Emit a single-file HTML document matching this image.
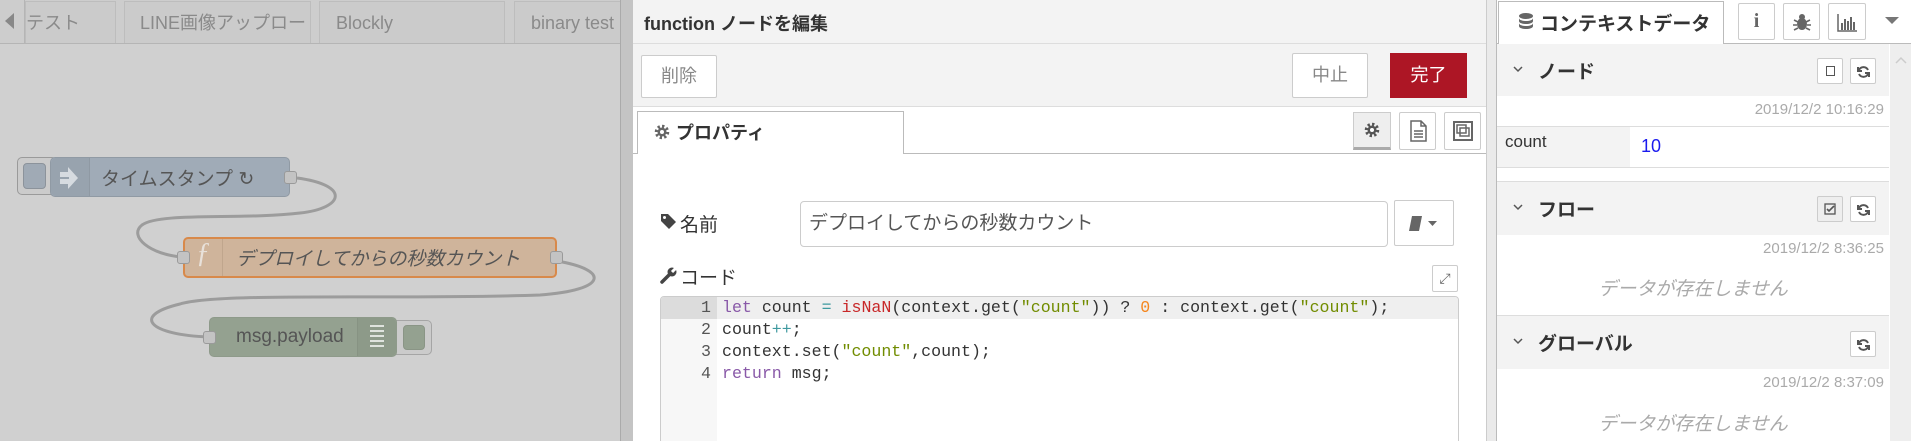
<!DOCTYPE html>
<html><head><meta charset="utf-8"><style>
*{box-sizing:border-box;margin:0;padding:0}
html,body{overflow:hidden}
body{width:1911px;height:441px;position:relative;background:#d0d0d0;font-family:"Liberation Sans","Noto Sans CJK JP",sans-serif;color:#333}
.a{position:absolute}
.tab{position:absolute;top:1px;height:42px;border:1px solid #bdbdbd;border-bottom:none;background:#cbcbcb;color:#8a8a8a;font-size:18px;line-height:42px;padding-left:15px;overflow:hidden;white-space:nowrap}
.port{position:absolute;width:13px;height:13px;background:#c3c3c3;border:1px solid #9a9a9a;border-radius:3px}
.btn{position:absolute;background:#fff;border:1px solid #ccc;border-radius:2px;text-align:center;color:#888}
.sbtn{position:absolute;width:26px;height:26px;background:#fff;border:1px solid #ccc;border-radius:2px}
.hdr{position:absolute;left:1497px;width:392px;background:#f3f3f3;border-top:1px solid #ddd}
.hdr .t{position:absolute;left:41px;font-weight:bold;font-size:19px;color:#333;top:13px}
.hdr svg{position:absolute;left:16px;top:22px}
.ts{position:absolute;right:27px;font-size:15px;color:#aaa}
.em{position:absolute;left:1497px;width:392px;text-align:center;font-size:19px;font-style:italic;color:#aaa}
.code{font-family:"Liberation Mono",monospace;font-size:16.6px;line-height:22px;white-space:pre}
</style></head><body>
<svg width="0" height="0" style="position:absolute"><defs>
<g id="gear"><circle cx="8" cy="8" r="5.5" fill="none" stroke="currentColor" stroke-width="3.5" stroke-dasharray="2.2 2.1"/><circle cx="8" cy="8" r="4.5" fill="currentColor"/><circle cx="8" cy="8" r="2" fill="#fff"/></g>
<g id="ref"><path d="M12,6 A5,5 0 0 0 3,6 M2,3v4h4 M3,10 A5,5 0 0 0 12,10 M13,13v-4h-4" fill="none" stroke="currentColor" stroke-width="2"/></g>
<path id="chev" d="M1,1l4,4l4,-4" fill="none" stroke="#555" stroke-width="1.5"/>
</defs></svg>

<!-- canvas tabs -->
<div class="a" style="left:0;top:0;width:633px;height:44px;background:#cdcdcd;border-bottom:1px solid #b5b5b5"></div>
<div class="a" style="left:5px;top:13px;width:0;height:0;border-top:8px solid transparent;border-bottom:8px solid transparent;border-right:9px solid #888"></div>
<div class="a" style="left:24px;top:0;width:1px;height:44px;background:#b5b5b5"></div>
<div class="tab" style="left:25px;width:91px;padding-left:0">テスト</div>
<div class="tab" style="left:124px;width:187px">LINE画像アップロード</div>
<div class="tab" style="left:319px;width:186px;padding-left:16px">Blockly</div>
<div class="tab" style="left:514px;width:110px;padding-left:16px">binary test</div>

<!-- wires -->
<svg class="a" style="left:0;top:0" width="633" height="441">
<g fill="none" stroke="#9c9c9c" stroke-width="3">
<path d="M297,178 C350,185 345,208 300,213 C240,220 160,212 142,225 C128,236 150,255 183,257"/>
<path d="M557,261 C610,270 608,290 540,295 C400,300 220,292 180,304 C130,316 150,335 209,337"/>
</g></svg>

<!-- inject node -->
<div class="a" style="left:17px;top:157px;width:40px;height:38px;background:#cbcbcb;border:1px solid #9a9a9a;border-radius:5px"></div>
<div class="a" style="left:23px;top:163px;width:23px;height:26px;background:#a0aab5;border:1px solid #8c939b;border-radius:4px"></div>
<div class="a" style="left:50px;top:157px;width:240px;height:40px;background:#a0abb7;border:1px solid #909aa4;border-radius:5px"></div>
<div class="a" style="left:51px;top:158px;width:39px;height:38px;background:#98a3ae;border-right:1px solid #8f99a3;border-radius:5px 0 0 5px"></div>
<svg class="a" style="left:58px;top:165px" width="24" height="26"><path d="M2,7h8v-5l10,11l-10,11v-5h-8z" fill="#d6dbe0"/><path d="M2,13h9" stroke="#98a3ae" stroke-width="2"/></svg>
<div class="a" style="left:101px;top:164px;font-size:19px;color:#555">タイムスタンプ ↻</div>
<div class="port" style="left:284px;top:171px"></div>

<!-- function node -->
<div class="a" style="left:183px;top:237px;width:374px;height:41px;background:#cfb49b;border:2px solid #d8894a;border-radius:5px"></div>
<div class="a" style="left:185px;top:239px;width:38px;height:37px;border-right:1px solid #c0a68d"></div>
<div class="a" style="left:196px;top:238px;font-size:28px;font-style:italic;color:#e8e1da;font-family:'Liberation Serif',serif">ƒ</div>
<div class="a" style="left:236px;top:244px;font-size:19px;font-style:italic;color:#555">デプロイしてからの秒数カウント</div>
<div class="port" style="left:177px;top:251px"></div>
<div class="port" style="left:550px;top:251px"></div>

<!-- debug node -->
<div class="a" style="left:390px;top:320px;width:42px;height:35px;background:#cbcbcb;border:1px solid #a5a5a5;border-radius:5px"></div>
<div class="a" style="left:403px;top:325px;width:22px;height:25px;background:#94a190;border:1px solid #8a9586;border-radius:4px"></div>
<div class="a" style="left:209px;top:317px;width:188px;height:40px;background:#94a190;border:1px solid #8e9a8a;border-radius:5px"></div>
<div class="a" style="left:357px;top:318px;width:39px;height:38px;background:#8d9a89;border-left:1px solid #879383;border-radius:0 5px 5px 0"></div>
<div class="a" style="left:370px;top:325px;width:14px;height:24px;background:repeating-linear-gradient(#dfe3de 0 2px,transparent 2px 5px)"></div>
<div class="a" style="left:236px;top:326px;font-size:19px;color:#555">msg.payload</div>
<div class="port" style="left:203px;top:331px"></div>

<!-- dialog -->
<div class="a" style="left:620px;top:0;width:13px;height:441px;background:#c4c4c4;border-left:1px solid #aaa"></div>
<div class="a" style="left:633px;top:0;width:853px;height:441px;background:#fff"></div>
<div class="a" style="left:633px;top:0;width:853px;height:44px;background:#f3f3f3;border-bottom:1px solid #ddd"></div>
<div class="a" style="left:644px;top:10px;font-size:18px;font-weight:bold;color:#333">function ノードを編集</div>
<div class="a" style="left:633px;top:44px;width:853px;height:63px;background:#f3f3f3;border-bottom:1px solid #ddd"></div>
<div class="btn" style="left:641px;top:55px;width:76px;height:43px;line-height:41px;font-size:18px">削除</div>
<div class="btn" style="left:1292px;top:53px;width:76px;height:45px;line-height:43px;font-size:18px">中止</div>
<div class="a" style="left:1390px;top:53px;width:77px;height:45px;background:#ad1625;color:#fff;text-align:center;line-height:45px;font-size:18px">完了</div>
<div class="a" style="left:633px;top:153px;width:853px;height:1px;background:#bbb"></div>
<div class="a" style="left:637px;top:111px;width:267px;height:43px;background:#fff;border:1px solid #bbb;border-bottom:none"></div>
<svg class="a" style="left:654px;top:124px;color:#666" width="16" height="16"><use href="#gear"/></svg>
<div class="a" style="left:676px;top:119px;font-size:18px;font-weight:bold;color:#333">プロパティ</div>
<div class="a" style="left:1353px;top:112px;width:38px;height:38px;background:#eee;border:1px solid #ccc;border-bottom:3px solid #aaa"></div>
<svg class="a" style="left:1364px;top:122px;color:#555" width="16" height="16"><use href="#gear"/></svg>
<div class="btn" style="left:1399px;top:112px;width:37px;height:38px"><svg width="20" height="22" style="margin-top:7px"><path d="M3,1h10l5,5v15h-15z M13,1v5h5 M6,11h9 M6,14h9 M6,17h9" fill="none" stroke="#666" stroke-width="1.5"/></svg></div>
<div class="btn" style="left:1444px;top:112px;width:37px;height:38px"><svg width="24" height="24" style="margin-top:6px"><rect x="3" y="3" width="18" height="18" fill="none" stroke="#666" stroke-width="2"/><rect x="6" y="6" width="9" height="8" fill="none" stroke="#666" stroke-width="1.5"/><rect x="9" y="9" width="9" height="8" fill="none" stroke="#666" stroke-width="1.5"/></svg></div>

<svg class="a" style="left:660px;top:213px" width="17" height="17"><path d="M1,1h7l8,8l-7,7l-8,-8z" fill="#444"/><circle cx="4.5" cy="4.5" r="1.5" fill="#fff"/></svg>
<div class="a" style="left:680px;top:210px;font-size:19px;color:#333">名前</div>
<div class="a" style="left:800px;top:201px;width:588px;height:46px;border:1px solid #ccc;border-radius:4px;font-size:19px;line-height:44px;padding-left:8px;color:#555">デプロイしてからの秒数カウント</div>
<div class="btn" style="left:1394px;top:200px;width:60px;height:46px"><svg width="34" height="20" style="margin-top:13px"><path d="M5,2h10l-3,15h-10z" fill="#666"/><path d="M21,7h9l-4.5,5z" fill="#666"/></svg></div>
<svg class="a" style="left:660px;top:266px" width="18" height="18"><path d="M2,16l8,-8" stroke="#444" stroke-width="3.5" stroke-linecap="round"/><circle cx="12" cy="6" r="4.5" fill="#444"/><path d="M12,6l5,-5" stroke="#fff" stroke-width="3"/></svg>
<div class="a" style="left:680px;top:263px;font-size:19px;color:#333">コード</div>
<div class="btn" style="left:1432px;top:265px;width:26px;height:27px;line-height:25px;font-size:14px;color:#666">⤢</div>

<div class="a" style="left:660px;top:296px;width:799px;height:150px;border:1px solid #ccc;border-radius:4px;overflow:hidden">
 <div class="a" style="left:0;top:0;width:56px;height:150px;background:#f7f7f7"></div>
 <div class="a" style="left:0;top:0;width:797px;height:22px;background:#efefef"></div>
 <div class="a" style="left:0;top:0;width:56px;height:22px;background:#dcdcdc"></div>
 <div class="a code" style="left:0;top:0;width:50px;text-align:right;color:#555">1
2
3
4</div>
 <div class="a code" style="left:61px;top:0;color:#333"><span style="color:#8959a8">let</span> count <span style="color:#3e999f">=</span> <span style="color:#c82829">isNaN</span>(context.get(<span style="color:#718c00">"count"</span>)) ? <span style="color:#f5871f">0</span> : context.get(<span style="color:#718c00">"count"</span>);
count<span style="color:#3e999f">++</span>;
context.set(<span style="color:#718c00">"count"</span>,count);
<span style="color:#8959a8">return</span> msg;</div>
</div>

<!-- separator -->
<div class="a" style="left:1486px;top:0;width:11px;height:441px;background:#eaeaea;border-left:1px solid #ccc;border-right:1px solid #bbb"></div>

<!-- sidebar -->
<div class="a" style="left:1497px;top:0;width:414px;height:441px;background:#fff"></div>
<div class="a" style="left:1497px;top:43px;width:414px;height:1px;background:#bbb"></div>
<div class="a" style="left:1498px;top:1px;width:226px;height:43px;background:#fff;border:1px solid #bbb;border-bottom:none"></div>
<svg class="a" style="left:1518px;top:12px" width="16" height="20"><ellipse cx="8" cy="4" rx="7" ry="3" fill="#666"/><path d="M1,6v3c0,4 14,4 14,0v-3c0,4 -14,4 -14,0zM1,11v3c0,4 14,4 14,0v-3c0,4 -14,4 -14,0z" fill="#666"/></svg>
<div class="a" style="left:1540px;top:9px;font-size:19px;font-weight:bold;color:#333">コンテキストデータ</div>
<div class="btn" style="left:1738px;top:3px;width:37px;height:37px;line-height:35px;font-weight:bold;font-family:'Liberation Serif',serif;font-size:20px;color:#666">i</div>
<div class="btn" style="left:1783px;top:3px;width:37px;height:37px"><svg width="20" height="20" style="margin-top:8px"><ellipse cx="10" cy="12" rx="5" ry="6" fill="#666"/><circle cx="10" cy="5" r="3" fill="#666"/><path d="M2,8l4,2M18,8l-4,2M1,13h4M19,13h-4M2,18l4,-2M18,18l-4,-2" stroke="#666" stroke-width="1.6"/></svg></div>
<div class="btn" style="left:1828px;top:3px;width:38px;height:37px"><svg width="22" height="20" style="margin-top:9px"><path d="M2,1v17h19" fill="none" stroke="#666" stroke-width="1.5"/><path d="M6,10v7M9,6v11M12,8v9M15,4v13M18,9v8" stroke="#666" stroke-width="2"/></svg></div>
<div class="a" style="left:1885px;top:17px;border-left:7px solid transparent;border-right:7px solid transparent;border-top:7px solid #777"></div>
<div class="a" style="left:1890px;top:44px;width:21px;height:397px;background:#eee"></div>
<svg class="a" style="left:1895px;top:56px" width="12" height="8"><path d="M1,7l5,-5l5,5" fill="none" stroke="#ccc" stroke-width="1.5"/></svg>

<div class="hdr" style="top:44px;height:52px;border-top:none"><svg width="11" height="7"><use href="#chev"/></svg><span class="t">ノード</span></div>
<div class="sbtn" style="left:1817px;top:58px"><div style="width:9px;height:10px;border:1px solid #555;margin:7px auto"></div></div>
<div class="sbtn" style="left:1850px;top:58px;color:#555"><svg width="15" height="15" style="margin:5px"><use href="#ref"/></svg></div>
<div class="ts" style="top:101px">2019/12/2 10:16:29</div>
<div class="a" style="left:1497px;top:126px;width:392px;height:42px;border-top:1px solid #ddd;border-bottom:1px solid #ddd"></div>
<div class="a" style="left:1497px;top:127px;width:133px;height:40px;background:#f3f3f3"></div>
<div class="a" style="left:1505px;top:132px;font-size:17px;color:#333">count</div>
<div class="a" style="left:1641px;top:136px;font-size:18px;color:#1a1aee">10</div>

<div class="hdr" style="top:181px;height:54px"><svg width="11" height="7"><use href="#chev"/></svg><span class="t">フロー</span></div>
<div class="sbtn" style="left:1817px;top:196px;background:#eee"><svg width="12" height="12" style="margin:6px"><rect x="1" y="1" width="10" height="10" fill="none" stroke="#555" stroke-width="1.3"/><path d="M3,6l2,2l5,-5" fill="none" stroke="#555" stroke-width="1.6"/></svg></div>
<div class="sbtn" style="left:1850px;top:196px;color:#555"><svg width="15" height="15" style="margin:5px"><use href="#ref"/></svg></div>
<div class="ts" style="top:240px">2019/12/2 8:36:25</div>
<div class="em" style="top:274px">データが存在しません</div>

<div class="hdr" style="top:315px;height:54px"><svg width="11" height="7"><use href="#chev"/></svg><span class="t">グローバル</span></div>
<div class="sbtn" style="left:1850px;top:331px;color:#555"><svg width="15" height="15" style="margin:5px"><use href="#ref"/></svg></div>
<div class="ts" style="top:374px">2019/12/2 8:37:09</div>
<div class="em" style="top:409px">データが存在しません</div>
</body></html>
